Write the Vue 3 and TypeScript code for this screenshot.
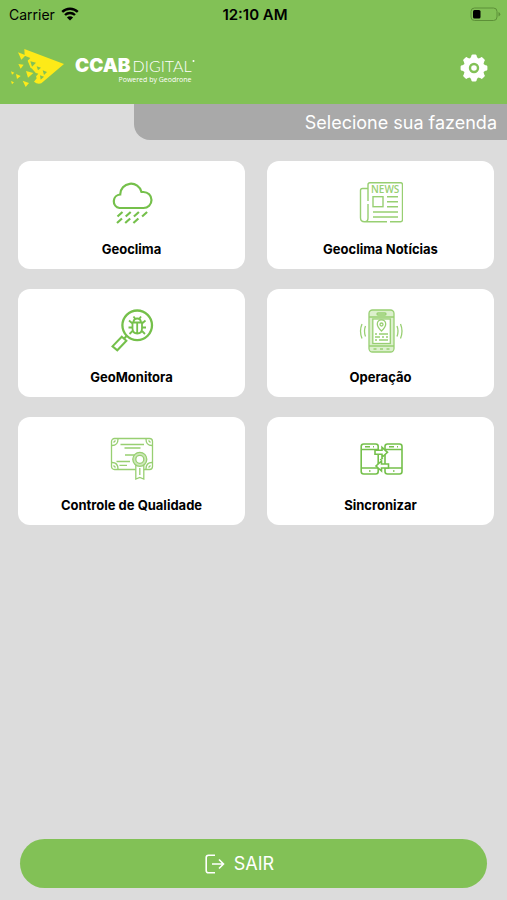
<script setup lang="ts">
type IconName = 'rain' | 'news' | 'bug' | 'phone' | 'certificate' | 'sync'

interface Tile {
  icon: IconName
  label: string
}

const tiles: Tile[] = [
  { icon: 'rain', label: 'Geoclima' },
  { icon: 'news', label: 'Geoclima Notícias' },
  { icon: 'bug', label: 'GeoMonitora' },
  { icon: 'phone', label: 'Operação' },
  { icon: 'certificate', label: 'Controle de Qualidade' },
  { icon: 'sync', label: 'Sincronizar' },
]

const teeth: number[] = [0, 45, 90, 135, 180, 225, 270, 315]
</script>

<template>
  <div class="screen">
    <header class="header">
      <div class="status">
        <div class="carrier">
          <span>Carrier</span>
          <svg class="wifi" viewBox="0 0 18 14" aria-hidden="true">
            <path d="M1.2 4.9a11.2 11.2 0 0 1 15.6 0M4 8a7.2 7.2 0 0 1 10 0" fill="none" stroke="currentColor" stroke-width="2.4" />
            <path d="M9 13.6 5.9 10.5a4.4 4.4 0 0 1 6.2 0z" fill="currentColor" />
          </svg>
        </div>
        <time class="clock">12:10 AM</time>
        <svg class="battery" viewBox="0 0 31 15" aria-hidden="true">
          <rect x="1" y="1" width="26" height="12.5" rx="3.5" fill="none" stroke="#5d9038" stroke-width="1" />
          <rect x="3" y="3" width="7.5" height="8.5" rx="1.5" fill="#000" />
          <path d="M28.5 5v4.5q1.8-.6 1.8-2.2T28.5 5z" fill="#5d9038" />
        </svg>
      </div>
      <div class="brandbar">
        <div class="brand">
          <svg class="mark" viewBox="30 24 165 120" aria-hidden="true">
            <g fill="#fdea18">
              <path d="M73 27 192 72 124 130q-12 4-22-5l8-10-4-13 12-4-10-12-16-2-9-22 8-8-17-7z" />
              <path d="M54 37l23 9-13 13zM55 72l16 2-9 12zM78 93l22 6-16 14zM48 102l14 6-11 9zM33 94l10 4-7 6zM68 122l19 7-10 12zM33 123l9 4-6 6z" />
              <path d="M84 60l24 8 14 34-14-2-14-16z" />
            </g>
            <path d="M91 64l17 4-12 12zM110 79l13 4-9 8zM128 91l13 5-9 9zM103 98l12 3-8 9zM120 106l12 4-10 9z" fill="#82c156" />
          </svg>
          <div class="wordmark">
            <div class="name">
              <b>CCAB</b><span>DIGITAL</span>
              <svg class="registered" viewBox="0 0 3 18" aria-hidden="true"><circle cx="1.5" cy="4" r="1" fill="#fff" /></svg>
            </div>
            <div class="tagline">Powered by Geodrone</div>
          </div>
        </div>
        <button class="settings" type="button" aria-label="Configurações">
          <svg viewBox="-14 -14 28 28" aria-hidden="true">
            <g fill="#fff">
              <circle r="10" />
              <path v-for="a in teeth" :key="a" :transform="`rotate(${a})`" d="M-4.5-8.5-2.8-11.5Q-2.7-13.4-1.5-13.4H1.5Q2.7-13.4 2.8-11.5L4.5-8.5z" />
            </g>
            <circle r="4" fill="none" stroke="#82c156" stroke-width="2.4" />
          </svg>
        </button>
      </div>
    </header>

    <button class="farm" type="button">Selecione sua fazenda</button>

    <main class="grid">
      <button v-for="tile in tiles" :key="tile.label" class="tile" type="button">
        <svg class="icon" viewBox="0 0 44 44" aria-hidden="true">
          <g v-if="tile.icon === 'rain'" stroke-width="2.2">
            <path d="M9.5 27H33.5a8 8 0 0 0 0-16h-2a10.8 10.8 0 0 0-21.3 2.5a6.8 6.8 0 0 0-.7 13.500z" />
            <path d="M7.5 35.500l5-4.500M15.700 35.500l5-4.500M23.900 35.500l5-4.500M32.100 35.500l5-4.500M7 42l5-4.500M15.200 42l5-4.500M23.400 42l5-4.500" />
          </g>
          <g v-else-if="tile.icon === 'news'" class="soft" stroke-width="1.4">
            <path d="M28 40.700H5.500q-4 0-4-4V9.500q0-2 2-2H9M9 20V3.700q0-2 2-2h30.500q2 0 2 2v35q0 2-2 2H31M9 23v14q0 3.700-3 3.700" />
            <rect x="14" y="15.700" width="10" height="10" />
            <path d="M28 15.700h11M28 20.700h11M28 25.700h11M14 31h25M14 36h25" />
            <text x="26.2" y="12.2" text-anchor="middle">NEWS</text>
          </g>
          <g v-else-if="tile.icon === 'bug'" stroke-width="2">
            <circle cx="27.2" cy="16.3" r="14.8" stroke-width="2.3" />
            <path d="M16.500 27l-2.500 2.700M11.800 27.700l4.600 4L7.300 41.300l-4.800-4z" />
            <path d="M22.500 13.500h9.500v6q0 5-4.700 5t-4.800-5zM27.200 14v10M23.500 13.500q0-4 3.700-4t3.700 4M25 9.500l-1.500-2M29.500 9.500l1.500-2M22.500 14.500l-3.500-3M32 14.500l3.500-3M22.500 18.500H18.500M32 18.500h4M23 21.500l-3.500 3.500M31.500 21.500l3.500 3.500" stroke-width="1.8" />
          </g>
          <g v-else-if="tile.icon === 'phone'" class="soft" stroke-width="1.3">
            <rect x="10" y="1" width="25" height="42" rx="3.5" fill="#dcf0cd" />
            <rect x="13.8" y="10" width="17.5" height="24.5" fill="#fff" />
            <rect x="18" y="4" width="9" height="2" rx="1" />
            <path d="M10 8h25M10 37h25M14.500 40h3M21 40h3M27.500 40h3" />
            <path d="M22.500 22q-4.200-4-4.200-7a4.200 4.200 0 0 1 8.400 0q0 3-4.200 7z" />
            <circle cx="22.5" cy="15.5" r="1.5" />
            <path d="M16 25h2M20 25h9M16 28h5M23 28h2M27 28h2M16 31h2M20 31h9" />
            <path d="M6.500 17q-2 5 0 10.500M3 15q-3 7 0 14.500M38 17q2 5 0 10.500M41.500 15q3 7 0 14.500" />
          </g>
          <g v-else-if="tile.icon === 'certificate'" class="soft" stroke-width="1.3">
            <rect x="1.5" y="1.5" width="41" height="31" rx="3" />
            <path d="M2 8.500q6 0 6-6.500M42 8.500q-6 0-6-6.500M2 25.500q6 0 6 6.500M42 25.500q-6 0-6 6.500M3.500 5.500l2-2M40.500 5.500l-2-2M3.500 28.500l2 2M40.500 28.500l-2 2" />
            <path d="M10.500 7.500H34M14.500 11h16M15 18h9.500M6.500 24.500H20M9.500 28.300H17" />
            <path d="M25.800 28v14l4-1.500 4 1.500V28M29.800 31v7" fill="#fff" />
            <circle cx="29.8" cy="22.3" r="7" fill="#cde8b8" />
            <circle cx="29.8" cy="22.3" r="4" fill="#fff" />
          </g>
          <g v-else stroke-width="1.6">
            <rect x="2.2" y="7" width="17" height="30" rx="2.5" />
            <rect x="26" y="7" width="17" height="30" rx="2.5" />
            <path d="M2.200 12.500h17M26 12.500h17M2.200 31h17M26 31h17M6 9.800h5M14 9.800h1M30 9.800h5M38 9.800h1M10 34h1.500M34 34h1.500" />
            <path d="M16 13.300h7v-3l5.500 5-5.500 5v-3h-7zM29.500 27h-7v-3l-5.500 5 5.500 5v-3h7z" fill="#fff" />
            <path d="M21 23l3-2" stroke-width="1.2" />
          </g>
        </svg>
        <span>{{ tile.label }}</span>
      </button>
    </main>

    <footer class="footer">
      <button class="logout" type="button">
        <svg viewBox="0 0 20 20" aria-hidden="true">
          <path d="M10 1.200H3.500q-2.300 0-2.300 2.300v13q0 2.300 2.300 2.300H10M7 10h11.500M14 5.500l4.500 4.500-4.500 4.500" fill="none" stroke="currentColor" stroke-width="1.6" />
        </svg>
        <span>SAIR</span>
      </button>
    </footer>
  </div>
</template>

<style>
body {
  background: #dcdcdc;
}
</style>

<style scoped>
.screen {
  min-height: 100vh;
  display: flex;
  flex-direction: column;
  background: #dcdcdc;
  font-family: Inter, "Liberation Sans", sans-serif;
  color: #000;
}
button {
  border: 0;
  padding: 0;
  font: inherit;
  cursor: pointer;
}
svg {
  display: block;
}
.header {
  background: #82c156;
}
.status {
  display: grid;
  grid-template-columns: 1fr auto 1fr;
  align-items: center;
  height: 28px;
  padding: 0 6px 0 9px;
  font-size: 14px;
}
.carrier {
  display: flex;
  align-items: center;
  gap: 6px;
}
.wifi {
  width: 18px;
  height: 14px;
}
.clock {
  font-size: 15px;
  font-weight: 600;
}
.battery {
  width: 31px;
  height: 15px;
  justify-self: end;
}
.brandbar {
  display: flex;
  align-items: center;
  justify-content: space-between;
  padding: 20px 19px 16px 10px;
}
.brand {
  display: flex;
  align-items: center;
  gap: 10px;
}
.mark {
  width: 55px;
  height: 40px;
}
.wordmark {
  padding-top: 4px;
  color: #fff;
}
.name {
  display: flex;
  align-items: center;
  line-height: 18px;
}
.name b {
  margin-right: 2px;
  font-weight: 900;
  font-size: 19px;
}
.name span {
  font-family: Lato, sans-serif;
  font-weight: 300;
  font-size: 16px;
}
.registered {
  width: 3px;
  height: 18px;
}
.tagline {
  padding: 1px 3px 0 0;
  font-family: "Open Sans", sans-serif;
  font-size: 7px;
  line-height: 8px;
  text-align: right;
}
.settings {
  width: 28px;
  height: 28px;
  background: none;
}
.farm {
  margin-left: 134px;
  height: 36px;
  padding-right: 10px;
  border-radius: 0 0 0 16px;
  background: #a9a9a9;
  color: #fff;
  font-size: 18px;
  text-align: right;
}
.grid {
  display: grid;
  grid-template-columns: 1fr 1fr;
  gap: 20px 22px;
  padding: 21px 13px 20px 18px;
}
.tile {
  display: flex;
  flex-direction: column;
  align-items: center;
  gap: 15px;
  padding: 20px 8px 11px;
  border-radius: 12px;
  background: #fff;
  color: #000;
  font-size: 13px;
  line-height: 18px;
  font-weight: 700;
}
.icon {
  width: 44px;
  height: 44px;
  fill: none;
  stroke: #75c04b;
}
.icon .soft {
  stroke: #98cf72;
}
.icon text {
  fill: #98cf72;
  stroke: none;
  font-family: "Open Sans", sans-serif;
  font-size: 10px;
  font-weight: 600;
}
.footer {
  margin-top: auto;
  padding: 0 20px 12px;
}
.logout {
  display: flex;
  align-items: center;
  justify-content: center;
  gap: 9px;
  width: 100%;
  height: 49px;
  padding-right: 28px;
  border-radius: 25px;
  background: #82c156;
  color: #fff;
  font-size: 18px;
}
.logout svg {
  width: 20px;
  height: 20px;
}
</style>
